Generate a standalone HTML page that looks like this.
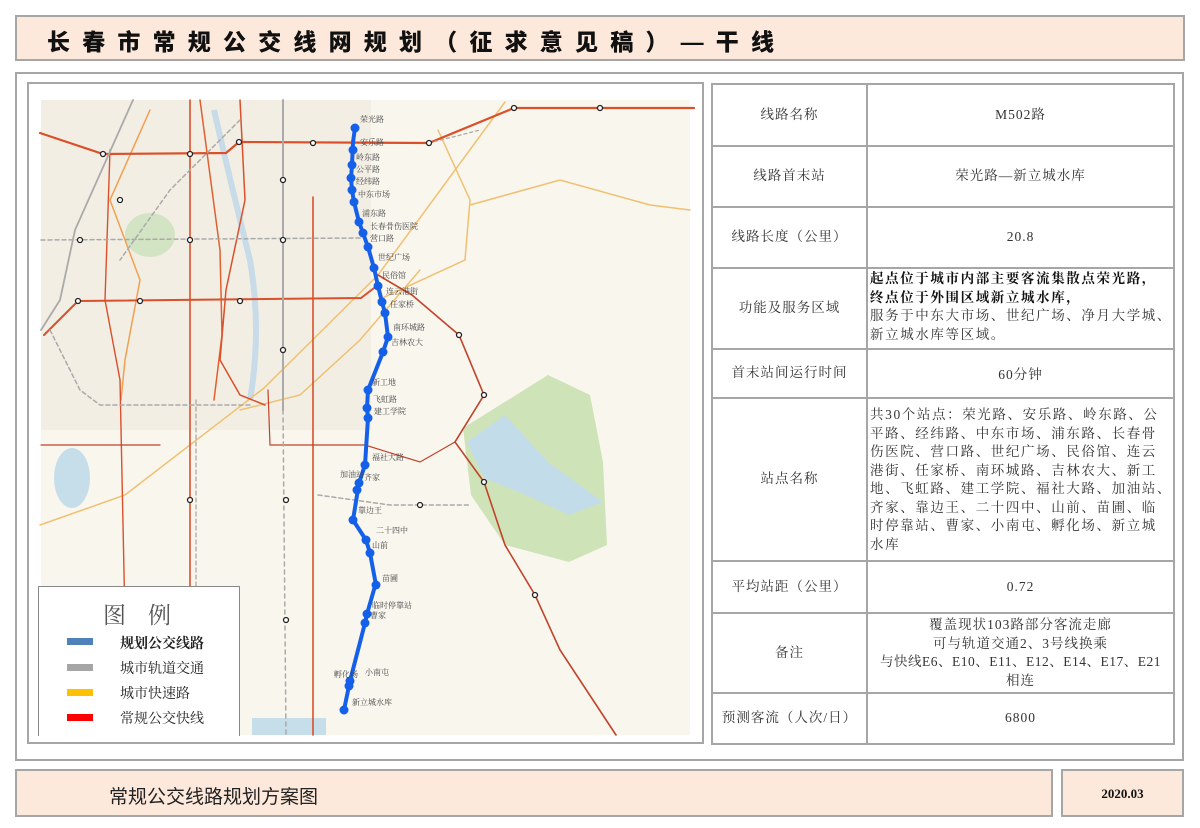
<!DOCTYPE html>
<html><head><meta charset="utf-8"><style>
*{margin:0;padding:0;box-sizing:border-box}
body{width:1200px;height:828px;background:#fff;position:relative;overflow:hidden;font-family:"Liberation Serif","Noto Serif CJK SC",serif;color:#333}
.box{position:absolute;border:2px solid #a6a6a6}
.title{left:15px;top:15px;width:1170px;height:46px;background:#fde9db}
.title span{position:absolute;left:30px;top:6px;font-family:"Liberation Sans","Noto Sans CJK SC",sans-serif;font-weight:900;font-size:23px;letter-spacing:12.2px;color:#111;white-space:nowrap}
.main{left:15px;top:72px;width:1169px;height:689px}
.mapf{left:27px;top:82px;width:677px;height:662px;border-width:2px}
table{position:absolute;left:711px;top:83px;border-collapse:collapse;width:464px;font-size:13.5px;letter-spacing:1px}
td{border:2px solid #a6a6a6;text-align:center;vertical-align:middle;padding:0;line-height:18.5px}
td.l{width:155px}
td.left{text-align:left;padding-left:2px;vertical-align:top;letter-spacing:1.6px;white-space:nowrap}
.foot{left:15px;top:769px;width:1038px;height:48px;background:#fde9db}
.foot span{position:absolute;left:92px;top:11px;font-family:"Liberation Sans","Noto Sans CJK SC",sans-serif;font-size:19px;color:#222}
.date{left:1061px;top:769px;width:123px;height:48px;background:#fde9db;font-weight:bold;font-size:13px;text-align:center;line-height:46px;color:#111}
.legend{position:absolute;left:38px;top:586px;width:202px;height:150px;background:#fff;border:1px solid #888;border-bottom:none}
.legend .h{position:absolute;left:64px;top:10px;font-size:23px;color:#555;letter-spacing:22px}
.legend .r{position:absolute;left:28px;height:7px;width:26px}
.legend .t{position:absolute;left:81px;font-size:14px;color:#222;font-family:"Liberation Serif","Noto Serif CJK SC",serif}
</style></head><body>
<div class="box title"><span>长春市常规公交线网规划（征求意见稿）—干线</span></div>
<div class="box main"></div>
<div class="box mapf"></div>
<svg style="position:absolute;left:0;top:0" width="1200" height="828">
<rect x="41" y="100" width="649" height="635" fill="#f9f6ee"/>
<rect x="41" y="100" width="330" height="330" fill="#f3eee4"/>
<polygon points="463,428 548,375 590,395 603,462 607,545 569,562 505,545 471,495" fill="#cfe3b8"/>
<polygon points="467,442 505,415 548,462 603,502 569,515 526,495 484,478" fill="#c3dce9"/>
<ellipse cx="72" cy="478" rx="18" ry="30" fill="#c6deea"/>
<rect x="252" y="718" width="74" height="17" fill="#c6deea"/>
<ellipse cx="150" cy="235" rx="25" ry="22" fill="#d2e4c3"/>
<path d="M214,110 Q230,180 250,260 Q262,330 250,400" stroke="#c8dbe8" stroke-width="6" fill="none"/>
<g fill="none" stroke-linecap="round">
<path d="M505,102 L378,275 L264,388 L125,495 L40,525" stroke="#f0c070" stroke-width="1.5"/>
<path d="M438,130 L470,200 L465,260 L378,300" stroke="#f0c070" stroke-width="1.5"/>
<path d="M420,270 L360,340 L300,395 L240,410" stroke="#f0c070" stroke-width="1.5"/>
<path d="M470,205 L560,180 L650,205 L690,210" stroke="#f0c070" stroke-width="1.5"/>
<path d="M150,110 L110,200 L140,280 L125,360 L121,400" stroke="#f0a050" stroke-width="1.5"/>
<path d="M200,100 L220,250 L222,335 L214,400" stroke="#e06030" stroke-width="1.5"/>
<path d="M40,133 L103,154 L226,153 L239,142 L429,143 L514,108 L694,108" stroke="#d9502a" stroke-width="2.2"/>
<path d="M44,335 L78,301 L361,298 L378,285" stroke="#d9502a" stroke-width="2"/>
<path d="M190,100 L190,735" stroke="#d9502a" stroke-width="1.6"/>
<path d="M313,197 L313,735" stroke="#d9502a" stroke-width="1.6"/>
<path d="M240,100 L245,200 L226,290 L220,360 L240,395 L265,405" stroke="#d9502a" stroke-width="1.5"/>
<path d="M110,150 L105,300 L120,380 L125,620" stroke="#d9502a" stroke-width="1.4"/>
<path d="M378,275 L412,295 L459,335 L484,395 L455,442 L484,482 L505,545 L535,595 L560,650 L616,735" stroke="#c0432a" stroke-width="1.6"/>
<path d="M268,390 L270,445 L365,445 L420,462 L455,442" stroke="#c0432a" stroke-width="1.2"/>
<path d="M41,445 L160,445" stroke="#c0432a" stroke-width="1.2"/>
<path d="M133,100 L75,230 L60,300 L41,330" stroke="#aaa" stroke-width="1.8"/>
<path d="M283,100 L283,410" stroke="#aaa" stroke-width="2"/>
<path d="M283,410 L286,735" stroke="#aaa" stroke-width="1.5" stroke-dasharray="4 4"/>
<path d="M41,240 L360,238" stroke="#aaa" stroke-width="1.5" stroke-dasharray="4 3"/>
<path d="M240,120 L170,190 L120,260" stroke="#aaa" stroke-width="1.5" stroke-dasharray="4 3"/>
<path d="M50,330 L80,390 L100,405 L250,405" stroke="#aaa" stroke-width="1.5" stroke-dasharray="4 3"/>
<path d="M318,495 L390,505 L470,505" stroke="#aaa" stroke-width="1.5" stroke-dasharray="4 3"/>
<path d="M196,400 L196,735" stroke="#aaa" stroke-width="1.3" stroke-dasharray="4 3"/>
<path d="M429,143 L480,130" stroke="#aaa" stroke-width="1.3" stroke-dasharray="3 3"/>
</g>
<g fill="#fff" stroke="#222" stroke-width="1.3">
<circle cx="103" cy="154" r="2.5"/><circle cx="190" cy="154" r="2.5"/><circle cx="239" cy="142" r="2.5"/><circle cx="313" cy="143" r="2.5"/><circle cx="429" cy="143" r="2.5"/><circle cx="514" cy="108" r="2.5"/><circle cx="600" cy="108" r="2.5"/><circle cx="78" cy="301" r="2.5"/><circle cx="140" cy="301" r="2.5"/><circle cx="240" cy="301" r="2.5"/><circle cx="283" cy="240" r="2.5"/><circle cx="283" cy="180" r="2.5"/><circle cx="283" cy="350" r="2.5"/><circle cx="190" cy="240" r="2.5"/><circle cx="80" cy="240" r="2.5"/><circle cx="459" cy="335" r="2.5"/><circle cx="484" cy="395" r="2.5"/><circle cx="484" cy="482" r="2.5"/><circle cx="535" cy="595" r="2.5"/><circle cx="190" cy="500" r="2.5"/><circle cx="190" cy="600" r="2.5"/><circle cx="286" cy="500" r="2.5"/><circle cx="286" cy="620" r="2.5"/><circle cx="420" cy="505" r="2.5"/><circle cx="120" cy="200" r="2.5"/>
</g>
<polyline fill="none" stroke="#1560e8" stroke-width="4" stroke-linejoin="round" points="355,128 353,142 352,165 351,178 352,190 354,202 359,222 363,233 368,247 374,268 378,286 382,302 385,313 388,337 383,352 368,390 367,408 368,418 365,465 359,483 353,520 366,540 370,553 376,585 375,586 367,614 365,623 350,681 344,710"/>
<g fill="#1560e8">
<circle cx="355" cy="128" r="4.5"/><circle cx="353" cy="150" r="4.5"/><circle cx="352" cy="165" r="4.5"/><circle cx="351" cy="178" r="4.5"/><circle cx="352" cy="190" r="4.5"/><circle cx="354" cy="202" r="4.5"/><circle cx="359" cy="222" r="4.5"/><circle cx="363" cy="233" r="4.5"/><circle cx="368" cy="247" r="4.5"/><circle cx="374" cy="268" r="4.5"/><circle cx="378" cy="286" r="4.5"/><circle cx="382" cy="302" r="4.5"/><circle cx="385" cy="313" r="4.5"/><circle cx="388" cy="337" r="4.5"/><circle cx="383" cy="352" r="4.5"/><circle cx="368" cy="390" r="4.5"/><circle cx="367" cy="408" r="4.5"/><circle cx="368" cy="418" r="4.5"/><circle cx="365" cy="465" r="4.5"/><circle cx="359" cy="483" r="4.5"/><circle cx="357" cy="490" r="4.5"/><circle cx="353" cy="520" r="4.5"/><circle cx="366" cy="540" r="4.5"/><circle cx="370" cy="553" r="4.5"/><circle cx="376" cy="585" r="4.5"/><circle cx="367" cy="614" r="4.5"/><circle cx="365" cy="623" r="4.5"/><circle cx="350" cy="681" r="4.5"/><circle cx="349" cy="686" r="4.5"/><circle cx="344" cy="710" r="4.5"/>
</g>
<g font-family="Liberation Serif,Noto Serif CJK SC,serif" font-size="8" fill="#444">
<text x="360" y="122">荣光路</text><text x="360" y="145">安乐路</text><text x="356" y="160">岭东路</text><text x="356" y="172">公平路</text><text x="356" y="184">经纬路</text><text x="358" y="197">中东市场</text><text x="362" y="216">浦东路</text><text x="370" y="229">长春骨伤医院</text><text x="370" y="241">营口路</text><text x="378" y="260">世纪广场</text><text x="382" y="278">民俗馆</text><text x="386" y="294">连云港街</text><text x="390" y="307">任家桥</text><text x="393" y="330">南环城路</text><text x="391" y="345">吉林农大</text><text x="372" y="385">新工地</text><text x="373" y="402">飞虹路</text><text x="374" y="414">建工学院</text><text x="372" y="460">福社大路</text><text x="340" y="477">加油站</text><text x="364" y="480">齐家</text><text x="358" y="513">靠边王</text><text x="376" y="533">二十四中</text><text x="372" y="548">山前</text><text x="382" y="581">苗圃</text><text x="372" y="608">临时停靠站</text><text x="370" y="618">曹家</text><text x="334" y="677">孵化场</text><text x="365" y="675">小南屯</text><text x="352" y="705">新立城水库</text>
</g>
</svg>
<div class="legend">
<div class="h">图例</div>
<div class="r" style="top:51px;background:#4f81bd"></div><div class="t" style="top:46px;font-weight:bold">规划公交线路</div>
<div class="r" style="top:77px;background:#a5a5a5"></div><div class="t" style="top:71px">城市轨道交通</div>
<div class="r" style="top:102px;background:#ffc000"></div><div class="t" style="top:96px">城市快速路</div>
<div class="r" style="top:127px;background:#ff0000"></div><div class="t" style="top:121px">常规公交快线</div>
</div>
<table>
<tr style="height:62px"><td class="l">线路名称</td><td>M502路</td></tr>
<tr style="height:61px"><td class="l">线路首末站</td><td>荣光路—新立城水库</td></tr>
<tr style="height:61px"><td class="l">线路长度（公里）</td><td>20.8</td></tr>
<tr style="height:81px"><td class="l">功能及服务区域</td><td class="left" style="padding-top:1px"><b style="color:#111">起点位于城市内部主要客流集散点荣光路，<br>终点位于外围区域新立城水库，</b><br>服务于中东大市场、世纪广场、净月大学城、<br>新立城水库等区域。</td></tr>
<tr style="height:49px"><td class="l">首末站间运行时间</td><td style="vertical-align:top;padding-top:16px">60分钟</td></tr>
<tr style="height:163px"><td class="l">站点名称</td><td class="left" style="padding-top:7px">共30个站点：荣光路、安乐路、岭东路、公<br>平路、经纬路、中东市场、浦东路、长春骨<br>伤医院、营口路、世纪广场、民俗馆、连云<br>港街、任家桥、南环城路、吉林农大、新工<br>地、飞虹路、建工学院、福社大路、加油站、<br>齐家、靠边王、二十四中、山前、苗圃、临<br>时停靠站、曹家、小南屯、孵化场、新立城<br>水库</td></tr>
<tr style="height:52px"><td class="l">平均站距（公里）</td><td>0.72</td></tr>
<tr style="height:80px"><td class="l">备注</td><td>覆盖现状103路部分客流走廊<br>可与轨道交通2、3号线换乘<br><span style="letter-spacing:0.5px">与快线E6、E10、E11、E12、E14、E17、E21</span><br>相连</td></tr>
<tr style="height:51px"><td class="l">预测客流（人次/日）</td><td>6800</td></tr>
</table>
<div class="box foot"><span>常规公交线路规划方案图</span></div>
<div class="box date">2020.03</div>
</body></html>
